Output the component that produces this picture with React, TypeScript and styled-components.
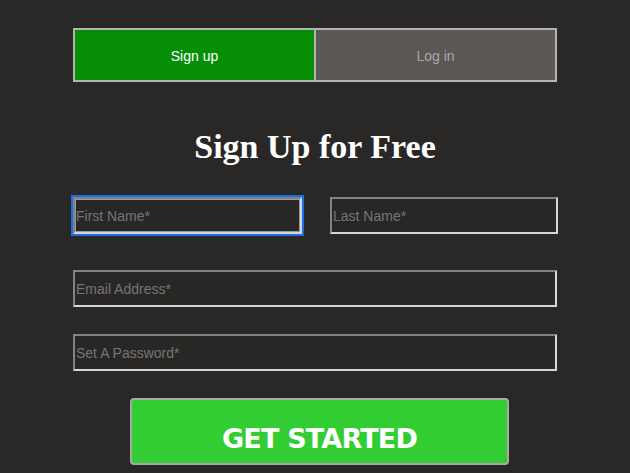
import React from "react";
import styled, { createGlobalStyle } from "styled-components";

const Global = createGlobalStyle`
  html, body { margin: 0; padding: 0; background: #2a2826; }
  body { font-family: "Liberation Sans", Arial, sans-serif; }
  * { box-sizing: border-box; }
`;

const Page = styled.div`
  width: 484px;
  margin: 0 auto;
  padding-top: 28px;
`;

const Tabs = styled.div`
  display: grid;
  grid-template-columns: 1fr 1fr;
  height: 54px;
`;

const Tab = styled.button<{ $active?: boolean }>`
  border: 2px solid #b4b4b4;
  border-left-width: ${(p) => (p.$active ? "2px" : "1px")};
  border-right-width: ${(p) => (p.$active ? "1px" : "2px")};
  background: ${(p) => (p.$active ? "#078e07" : "#5c5755")};
  color: ${(p) => (p.$active ? "#ffffff" : "#a9a9a9")};
  font-family: "Liberation Sans", Arial, sans-serif;
  font-size: 14px;
  padding: 2px 0 0;
  cursor: pointer;
`;

const Title = styled.h1`
  margin: 46px 0 32px;
  text-align: center;
  color: #ffffff;
  font-family: "Liberation Serif", "Times New Roman", serif;
  font-weight: bold;
  font-size: 34px;
  line-height: 37px;
`;

const Row = styled.div`
  display: grid;
  grid-template-columns: 229px 228px;
  justify-content: space-between;
  margin-right: -1px;
`;

const Field = styled.input<{ $focused?: boolean }>`
  display: block;
  width: 100%;
  height: 37px;
  margin: 0;
  padding: 1px 1px;
  background: #292726;
  border: 2px inset #d6d6d6;
  color: #ddd;
  font-family: "Liberation Sans", Arial, sans-serif;
  font-size: 14px;
  outline: ${(p) => (p.$focused ? "2px solid #1c6ee6" : "none")};
  outline-offset: 0px;
  box-shadow: ${(p) => (p.$focused ? "inset 0 0 0 1px #9a9a9a" : "none")};
  &::placeholder { color: #757575; }
`;

const Stack = styled.div<{ $top: number }>`
  margin-top: ${(p) => p.$top}px;
`;

const Submit = styled.button`
  display: block;
  margin: 27px 0 0 57px;
  width: 379px;
  height: 67px;
  padding: 13px 0 0;
  background: #32cd32;
  border: 2px solid #a9a9a9;
  border-radius: 4px;
  color: #ffffff;
  font-family: "DejaVu Sans", Verdana, sans-serif;
  font-weight: bold;
  font-size: 27px;
  letter-spacing: -0.8px;
  cursor: pointer;
`;

export default function App() {
  return (
    <>
      <Global />
      <Page>
        <Tabs>
          <Tab $active>Sign up</Tab>
          <Tab>Log in</Tab>
        </Tabs>
        <Title>Sign Up for Free</Title>
        <Row>
          <Field $focused placeholder="First Name*" />
          <Field placeholder="Last Name*" />
        </Row>
        <Stack $top={36}>
          <Field placeholder="Email Address*" />
        </Stack>
        <Stack $top={27}>
          <Field placeholder="Set A Password*" />
        </Stack>
        <Submit>GET STARTED</Submit>
      </Page>
    </>
  );
}
